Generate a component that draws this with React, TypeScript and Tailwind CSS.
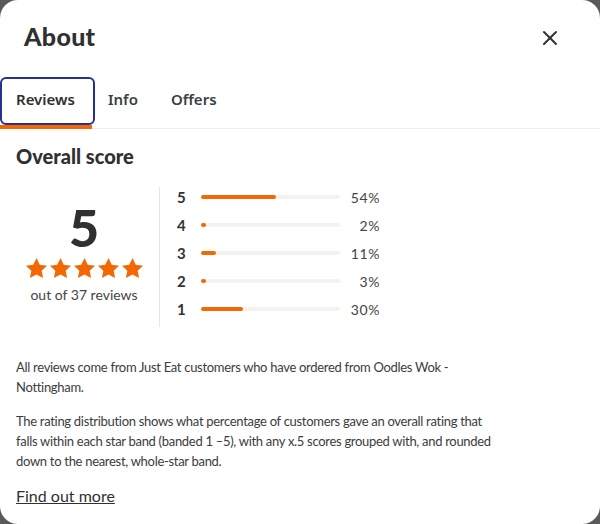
import { X } from "lucide-react";

const bars = [
  { n: 5, pct: 54 },
  { n: 4, pct: 2 },
  { n: 3, pct: 11 },
  { n: 2, pct: 3 },
  { n: 1, pct: 30 },
];

function Star() {
  return (
    <svg viewBox="0 0 24 24" className="w-[23px] h-[23px]" fill="#f36805">
      <path d="M12 1l3.4 7 7.6 1-5.6 5.3 1.5 7.7L12 18.2l-6.9 3.8 1.5-7.7L1 9l7.6-1z" />
    </svg>
  );
}

export default function App() {
  return (
    <div className="w-[600px] h-[524px] bg-[#5a5a5a]">
      <div className="w-full h-full bg-white rounded-[18px] overflow-hidden font-['Lato',sans-serif] text-[#303030]">
        <div className="flex justify-between items-start pl-6 pr-[38px] pt-[21px] h-[77px]">
          <h1 className="font-black text-[25px] leading-[30px] tracking-[0.3px]">About</h1>
          <X className="w-6 h-6 mt-[5px]" strokeWidth={2} />
        </div>

        <div className="flex border-b border-[#ececec] h-[52px] font-['Noto_Sans',sans-serif]">
          <div className="relative w-[95px] h-[48px] border-2 border-[#24318f] rounded-md flex items-center pl-[14px] pb-[3px] text-[15px] font-semibold">
            Reviews
            <div className="absolute left-[-2px] right-[1px] bottom-[-6px] h-1 bg-[#f36805]" />
          </div>
          <div className="h-[48px] flex items-center pb-[3px] pl-[13px] text-[15px] font-semibold text-[#3a3f44]">Info</div>
          <div className="h-[48px] flex items-center pb-[3px] pl-[33px] text-[15px] font-semibold text-[#3a3f44]">Offers</div>
        </div>

        <div className="px-4">
          <h2 className="font-black text-[20px] mt-[15px] leading-[24px]">Overall score</h2>

          <div className="flex mt-[19px]">
            <div className="w-[144px] h-[140px] pr-[7px] border-r border-[#e6e6e6] flex flex-col items-center justify-center">
              <div className="font-black text-[52px] leading-[46px] mt-[-6px]">5</div>
              <div className="flex gap-[1px] mt-[7px]">
                <Star /><Star /><Star /><Star /><Star />
              </div>
              <div className="text-[14px] text-[#444] mt-[4px]">out of 37 reviews</div>
            </div>
            <div className="flex flex-col pl-[17px] gap-[8px]">
              {bars.map((b) => (
                <div key={b.n} className="flex items-center h-5">
                  <span className="w-[24px] text-[15px] font-bold text-[#333]">{b.n}</span>
                  <div className="w-[139px] h-1 rounded-full bg-[#f5f2ee]">
                    <div className="h-1 rounded-full bg-[#f36805] min-w-[5px]" style={{ width: `${b.pct}%` }} />
                  </div>
                  <span className="w-[40px] text-right text-[14px] text-[#444] tracking-[0.6px]">{b.pct}%</span>
                </div>
              ))}
            </div>
          </div>

          <div className="w-[488px] text-[13px] leading-5 tracking-[-0.3px] text-[#3c3c3c]">
            <p className="mt-[30px]">
              All reviews come from Just Eat customers who have ordered from Oodles Wok - Nottingham.
            </p>
            <p className="mt-[14px]">
              The rating distribution shows what percentage of customers gave an overall rating that falls within each star band (banded 1 –5), with any x.5 scores grouped with, and rounded down to the nearest, whole-star band.
            </p>
            <a className="block mt-[15px] text-[16px] tracking-normal underline text-[#303030]">Find out more</a>
          </div>
        </div>
      </div>
    </div>
  );
}
